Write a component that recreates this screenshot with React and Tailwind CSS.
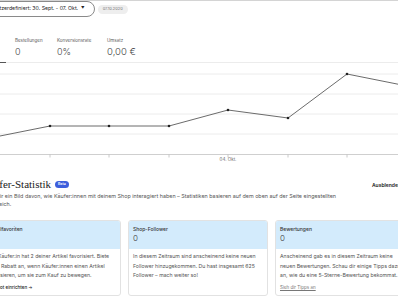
import React from "react";

const points = [
  [-10, 138],
  [50, 126],
  [109, 126],
  [169, 126],
  [228, 110],
  [288, 118],
  [347, 74],
  [407, 86],
];
const ticks = [-10, 50, 109, 169, 228, 288, 347, 407];
const grid = [74, 94, 114, 134];

const cards = [
  {
    title: "Artikelfavoriten",
    value: "0",
    text: "Eine Käufer:in hat 2 deiner Artikel favorisiert. Biete einen Rabatt an, wenn Käufer:innen einen Artikel favorisieren, um sie zum Kauf zu bewegen.",
    link: "Angebot einrichten →",
  },
  {
    title: "Shop-Follower",
    value: "0",
    text: "In diesem Zeitraum sind anscheinend keine neuen Follower hinzugekommen. Du hast insgesamt 625 Follower – mach weiter so!",
  },
  {
    title: "Bewertungen",
    value: "0",
    text: "Anscheinend gab es in diesem Zeitraum keine neuen Bewertungen. Schau dir einige Tipps dazu an, wie du eine 5-Sterne-Bewertung bekommst.",
    link: "Sieh dir Tipps an",
    underline: true,
  },
];

function Chart() {
  return (
    <svg width="434" height="102" viewBox="-19 63 434 102" className="block">
      {grid.map((y) => (
        <line key={y} x1="-19" x2="415" y1={y} y2={y} stroke="#ececec" strokeWidth="1" />
      ))}
      <line x1="-19" x2="415" y1="154.5" y2="154.5" stroke="#cfcfcf" strokeWidth="1" />
      {ticks.map((x) => (
        <line key={x} x1={x} x2={x} y1="154.5" y2="157.5" stroke="#bdbdbd" strokeWidth="0.8" />
      ))}
      <text x="228" y="160.5" textAnchor="middle" fontSize="4.5" fill="#666" fontFamily="Inter, sans-serif">
        04. Okt.
      </text>
      <polyline
        points={points.map((p) => p.join(",")).join(" ")}
        fill="none"
        stroke="#5a5a5a"
        strokeWidth="0.9"
      />
      {points.map(([x, y]) => (
        <circle key={x} cx={x} cy={y} r="1.3" fill="#222" />
      ))}
    </svg>
  );
}

function StatCard({ title, value, text, link, underline }) {
  return (
    <div className="w-[140px] shrink-0 rounded-[3px] border border-[#e2e2e2] overflow-hidden bg-white">
      <div className="bg-[#d3ebfc] h-[28px] px-[4px] pt-[5px]">
        <div className="text-[5px] leading-[6px] font-medium text-[#333]">{title}</div>
        <div className="text-[8px] leading-[10px] font-light text-[#444] mt-[1px]">{value}</div>
      </div>
      <div className="pl-[4px] pr-[8px] pt-[3px] pb-[3px] h-[46px]">
        <p className="text-[5.2px] leading-[9.5px] text-[#555]">{text}</p>
        {link && (
          <div
            className={
              underline
                ? "mt-[4px] text-[4.5px] leading-[6px] text-[#777] underline"
                : "mt-[4px] text-[4.5px] leading-[6px] text-[#222] font-medium"
            }
          >
            {link}
          </div>
        )}
      </div>
    </div>
  );
}

export default function App() {
  return (
    <div className="w-[398px] h-[297px] overflow-hidden bg-white border-t border-[#d4d4d4] font-['Inter',sans-serif] text-[#222]">
      <div className="-ml-[19px] w-[434px]">
        <div className="flex items-center gap-[3px] h-[16px]">
          <button className="h-[16px] pl-[5px] pr-[9px] rounded-full border border-[#8a8a8a] text-[5.2px] flex items-center gap-[3px] whitespace-nowrap text-[#222]">
            Benutzerdefiniert: 30. Sept. - 07. Okt.
            <span className="text-[3.5px]">▼</span>
          </button>
          <span className="rounded-full bg-[#eeeeee] px-[5px] py-[1.5px] text-[4px] text-[#777] whitespace-nowrap">
            07.10.2020
          </span>
        </div>

        <div className="flex pl-[34px] mt-[21px]">
          <div className="w-[42px]">
            <div className="text-[4.5px] leading-[6px] text-[#595959]">Bestellungen</div>
            <div className="text-[9px] leading-[10px] font-light text-[#444] mt-[3px]">0</div>
          </div>
          <div className="w-[50px]">
            <div className="text-[4.5px] leading-[6px] text-[#595959]">Konversionsrate</div>
            <div className="text-[9px] leading-[10px] font-light text-[#444] mt-[3px]">0%</div>
          </div>
          <div className="w-[50px]">
            <div className="text-[4.5px] leading-[6px] text-[#595959]">Umsatz</div>
            <div className="text-[9.5px] leading-[10px] font-light text-[#444] mt-[3px]">0,00 €</div>
          </div>
        </div>

        <div className="flex mt-[5px] h-[1px]">
          <div className="w-[25px] bg-[#555]" />
          <div className="flex-1 bg-[#ececec]" />
        </div>

        <Chart />

        <div className="flex items-center mt-[13px]">
          <h2 className="font-['Liberation_Serif',serif] text-[11px] leading-[13px] text-[#222]">
            Käufer-Statistik
          </h2>
          <span className="ml-[4px] rounded-full bg-[#3d5fdc] text-white text-[3.5px] font-semibold px-[3px] h-[7px] flex items-center">
            Beta
          </span>
          <span className="ml-auto mr-[14px] mt-[3px] text-[5px] font-semibold text-[#222]">Ausblenden</span>
        </div>
        <p className="mt-[1px] max-w-[370px] text-[5.4px] leading-[8px] text-[#555]">
          Mach dir ein Bild davon, wie Käufer:innen mit deinem Shop interagiert haben – Statistiken basieren auf dem oben auf der Seite eingestellten Zeitbereich.
        </p>

        <div className="flex gap-[7px] mt-[12px]">
          {cards.map((c) => (
            <StatCard key={c.title} {...c} />
          ))}
        </div>
      </div>
    </div>
  );
}
